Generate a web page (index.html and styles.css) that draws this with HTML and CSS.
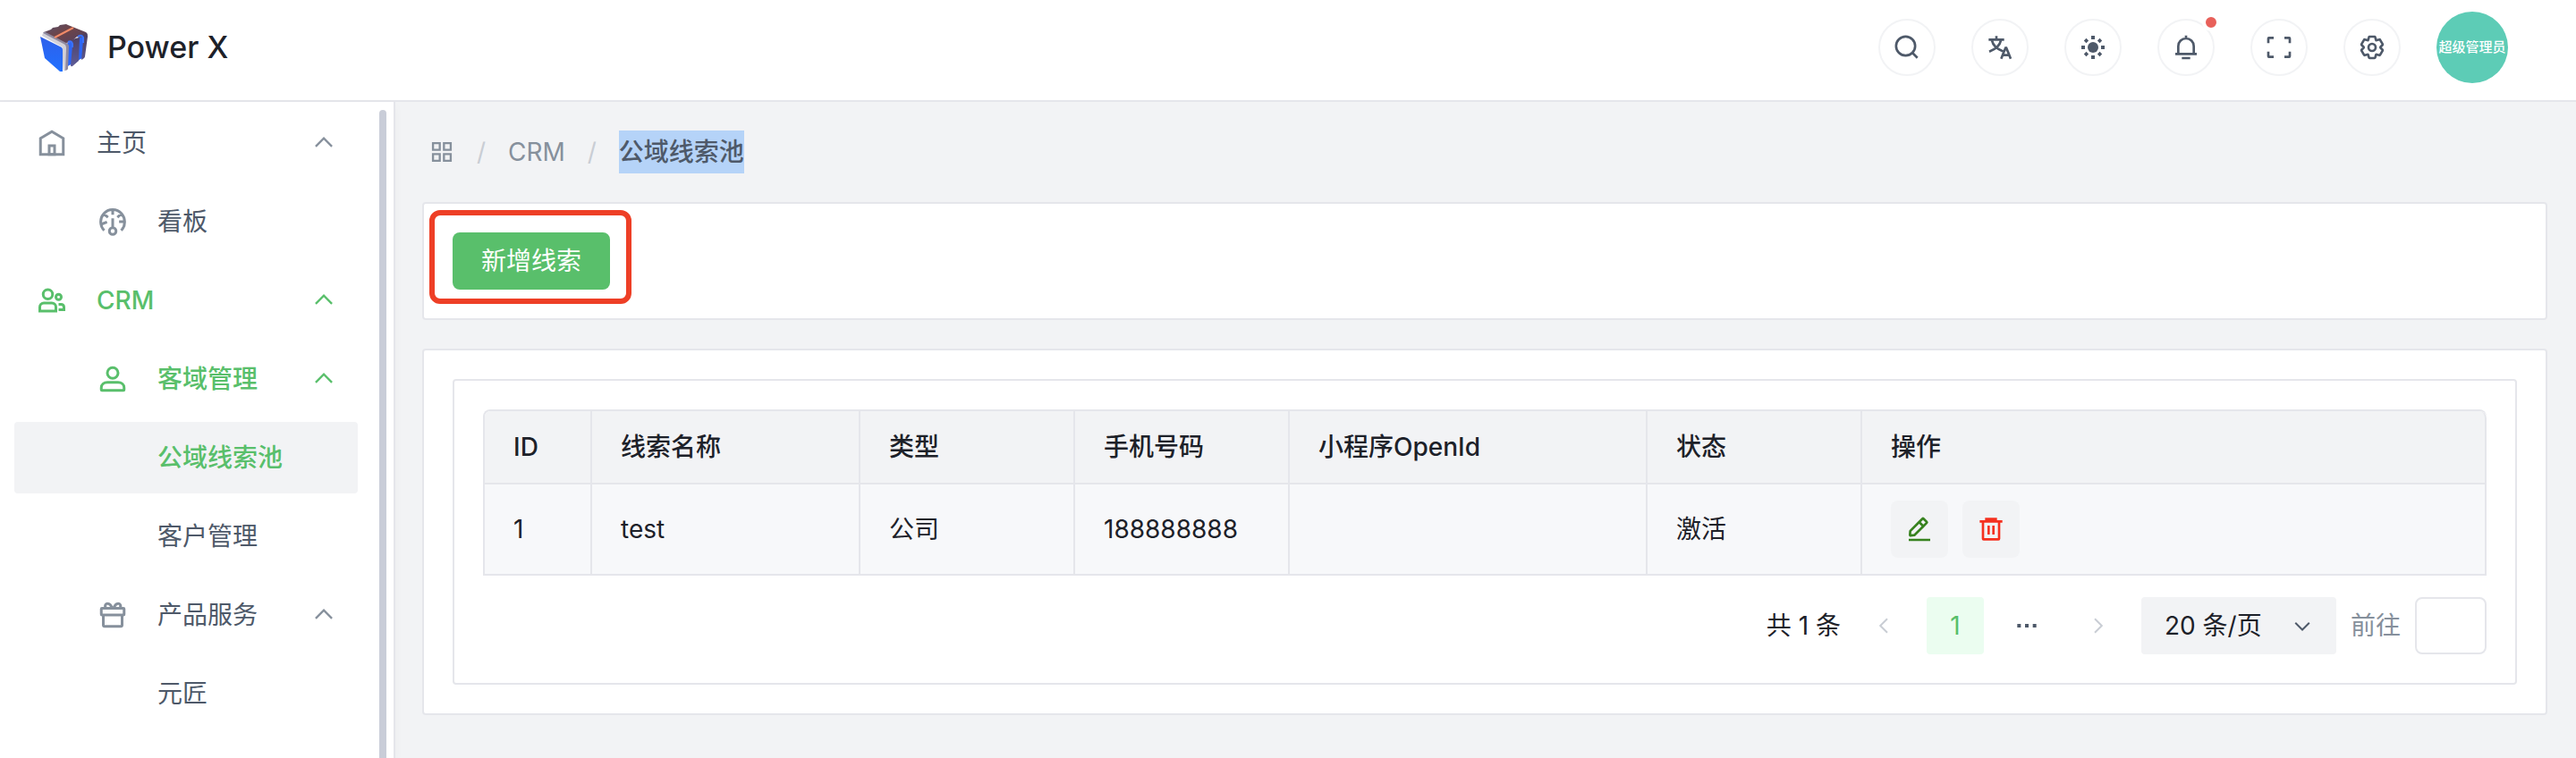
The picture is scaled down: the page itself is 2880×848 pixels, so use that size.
FILE: index.html
```html
<!DOCTYPE html>
<html lang="zh-CN">
<head>
<meta charset="utf-8">
<title>Power X</title>
<link rel="stylesheet" href="styles.css">
</head>
<body>
<svg class="sprite" aria-hidden="true">
  <symbol id="i-home" viewBox="0 0 48 48"><path d="M7 17 24 7l17 10v24H7V17Z"/><path d="M20 28h8v13h-8V28Z"/></symbol>
  <symbol id="i-dashboard" viewBox="0 0 48 48"><path d="M41.808 24c.118 4.63-1.486 9.333-5.21 13m5.21-13h-8.309m8.309 0c-.112-4.38-1.767-8.694-4.627-12M24 6c5.531 0 10.07 2.404 13.18 6M24 6c-5.724 0-10.384 2.574-13.5 6.38M24 6v7.5M37.18 12 31 17.5m-20.5-5.12L17 17.5m-6.5-5.12C6.99 16.662 5.44 22.508 6.53 28m4.872 9c-2.65-2.609-4.226-5.742-4.873-9m0 0 8.97-3.5M24 33a5 5 0 1 0 0 10 5 5 0 0 0 0-10Zm0 0V19"/></symbol>
  <symbol id="i-group" viewBox="0 0 48 48"><circle cx="18" cy="15" r="7"/><circle cx="34" cy="19" r="4"/><path d="M6 34a6 6 0 0 1 6-6h12a6 6 0 0 1 6 6v6H6v-6ZM34 30h4a4 4 0 0 1 4 4v4h-8"/></symbol>
  <symbol id="i-user" viewBox="0 0 48 48"><path d="M7 37c0-4.97 4.03-8 9-8h16c4.97 0 9 3.03 9 8v3a1 1 0 0 1-1 1H8a1 1 0 0 1-1-1v-3Z"/><circle cx="24" cy="15" r="8"/></symbol>
  <symbol id="i-gift" viewBox="0 0 48 48"><path d="M13.45 14.043H8a1 1 0 0 0-1 1v8a1 1 0 0 0 1 1h32a1 1 0 0 0 1-1v-8a1 1 0 0 0-1-1h-4.893m-21.657 0c-1.036-2.833-.615-5.6 1.182-6.637 2.152-1.243 5.464.464 7.397 3.812.539.933.914 1.896 1.127 2.825m-9.706 0h9.706m0 0H25.4m0 0a9.776 9.776 0 0 1 1.128-2.825c1.933-3.348 5.244-5.055 7.397-3.812 1.797 1.037 2.217 3.804 1.182 6.637m-9.707 0h9.707M10 26.043a2 2 0 0 1 2-2h24a2 2 0 0 1 2 2v13a2 2 0 0 1-2 2H12a2 2 0 0 1-2-2v-13Z"/></symbol>
  <symbol id="i-up" viewBox="0 0 48 48"><path d="M39.6 30.557 24.043 15 8.487 30.557"/></symbol>
  <symbol id="i-down" viewBox="0 0 48 48"><path d="M39.6 17.443 24.043 33 8.487 17.443"/></symbol>
  <symbol id="i-left" viewBox="0 0 48 48"><path d="M32 8.4 16.444 23.956 32 39.513"/></symbol>
  <symbol id="i-right" viewBox="0 0 48 48"><path d="m16 39.513 15.556-15.557L16 8.4"/></symbol>
  <symbol id="i-search" viewBox="0 0 48 48"><path d="M33.072 33.071c6.248-6.248 6.248-16.379 0-22.627-6.249-6.249-16.38-6.249-22.628 0-6.248 6.248-6.248 16.379 0 22.627 6.248 6.248 16.38 6.248 22.628 0Zm0 0 8.485 8.485"/></symbol>
  <symbol id="i-language" viewBox="0 0 48 48"><path d="m42 43-2.385-6M26 43l2.384-6m11.231 0-.795-2-4.18-10h-1.28l-4.181 10-.795 2m11.231 0h-11.23M18 5v6M5 11h26M10 11s1.889 7.826 6.611 12.174C21.333 27.522 30 31 30 31M26 11s-1.889 7.826-6.611 12.174C14.667 27.522 6 31 6 31"/></symbol>
  <symbol id="i-sun" viewBox="0 0 48 48"><g fill="currentColor" stroke="none"><circle cx="24" cy="24" r="9"/><path d="M21 4.5h6v6h-6zM21 37.5h6v6h-6zM4.500 21h6v6h-6zM37.500 21h6v6h-6zM12.700 8.700l4 4-4 4-4-4zM35.300 8.700l4 4-4 4-4-4zM12.700 31.300l4 4-4 4-4-4zM35.300 31.300l4 4-4 4-4-4z"/></g></symbol>
  <symbol id="i-bell" viewBox="0 0 48 48"><path d="M24 9c7.18 0 13 5.820 13 13v13H11V22c0-7.180 5.820-13 13-13Zm0 0V4M6 35h36m-25 7h14"/></symbol>
  <symbol id="i-full" viewBox="0 0 48 48"><path d="M42 17V9a1 1 0 0 0-1-1h-8M6 17V9a1 1 0 0 1 1-1h8m27 23v8a1 1 0 0 1-1 1h-8M6 31v8a1 1 0 0 0 1 1h8"/></symbol>
  <symbol id="i-settings" viewBox="0 0 48 48"><path d="M18.797 6.732A1 1 0 0 1 19.760 6h8.480a1 1 0 0 1 .964.732l1.285 4.628a1 1 0 0 0 1.213.7l4.651-1.200a1 1 0 0 1 1.116.468l4.240 7.344a1 1 0 0 1-.153 1.200L38.193 23.300a1 1 0 0 0 0 1.402l3.364 3.427a1 1 0 0 1 .153 1.200l-4.240 7.344a1 1 0 0 1-1.116.468l-4.650-1.200a1 1 0 0 0-1.214.7l-1.285 4.628a1 1 0 0 1-.964.732h-8.480a1 1 0 0 1-.963-.732L17.510 36.640a1 1 0 0 0-1.213-.7l-4.650 1.200a1 1 0 0 1-1.116-.468l-4.240-7.344a1 1 0 0 1 .153-1.200L9.809 24.700a1 1 0 0 0 0-1.402l-3.364-3.427a1 1 0 0 1-.153-1.200l4.240-7.344a1 1 0 0 1 1.116-.468l4.650 1.200a1 1 0 0 0 1.213-.7l1.286-4.628Z"/><circle cx="24" cy="24" r="6"/></symbol>
  <symbol id="i-apps" viewBox="0 0 48 48"><path d="M7 7h13v13H7V7Zm21 0h13v13H28V7ZM7 28h13v13H7V28Zm21 0h13v13H28V28Z"/></symbol>
  <symbol id="i-edit" viewBox="0 0 48 48"><path d="m30.480 19.038 5.733-5.734a1 1 0 0 0 0-1.414l-5.586-5.586a1 1 0 0 0-1.414 0l-5.734 5.734m7 7L15.763 33.754a1 1 0 0 1-.59.286l-6.048.708a1 1 0 0 1-1.113-1.069l.477-6.310a1 1 0 0 1 .29-.631l14.700-14.700m7 7-7-7M6 42h36"/></symbol>
  <symbol id="i-delete" viewBox="0 0 48 48"><path d="M5 11h5.500m0 0v29a1 1 0 0 0 1 1h25a1 1 0 0 0 1-1V11m-27 0H16m21.500 0H43m-5.500 0H32m-16 0V7h16v4m-16 0h16M20 18v15m8-15v15"/></symbol>
  <symbol id="i-more" viewBox="0 0 48 48"><path fill="currentColor" stroke="none" d="M8 21h6v6H8zM21 21h6v6h-6zM34 21h6v6h-6z"/></symbol>
</svg>

<header class="navbar">
  <div class="brand">
    <svg class="logo" viewBox="0 0 64 68" role="img" aria-label="Power X">
      <defs>
        <linearGradient id="face" x1="0" y1="0" x2="0" y2="1"><stop offset="0" stop-color="#2f60ea"/><stop offset="1" stop-color="#2070ff"/></linearGradient>
        <linearGradient id="top" x1="0" y1="0" x2="1" y2="1"><stop offset="0" stop-color="#55506e"/><stop offset=".4" stop-color="#6e4448"/><stop offset="1" stop-color="#4a4068"/></linearGradient>
        <linearGradient id="side" x1="0" y1="0" x2="0" y2="1"><stop offset="0" stop-color="#4c3d5e"/><stop offset="1" stop-color="#5d5c98"/></linearGradient>
      </defs>
      <path fill="#2d66f5" d="M34 30 55 20 52 46 34 56Z"/>
      <path fill="url(#top)" d="M9 17 17 14l2-2 6-1 2-2 7-1 2 1 20 8q2 1 1 4l-8 2-3-1-7 6-5 1-5 4-2-2Z"/>
      <path fill="url(#side)" d="M40 26q5-3 9-3l-1 26-7 6q-2 1-2-1l2-22q0-4-2-4ZM51 20l6-2q1 1 1 4l-3 22q0 2-4 4l2-22q0-4-3-4Z"/>
      <path fill="none" stroke="#3a72ff" stroke-width="2" d="M36 28q4-2 5 2v4M47 22q4-3 6 1v6"/>
      <path fill="#8f899f" d="M8 18q1-2 3-1l23 12q3 1 3 4l-1 25q-1 2-5 2l-1-27Z"/>
      <path fill="#d3d1d8" d="m8 18 23 12q3 1 3 5l-1 25h-2l-1-26L7 21Z"/>
      <path fill="url(#face)" d="m5 22 24 12q1 1 1 3v24h-3L10 46Z"/>
      <path fill="none" stroke="#f08a68" stroke-width="2" d="M21 23 42 12"/>
    </svg>
    <span class="brand-name">Power X</span>
  </div>
  <div class="tools">
    <button class="tool" aria-label="搜索"><svg class="icon"><use href="#i-search"/></svg></button>
    <button class="tool" aria-label="语言"><svg class="icon"><use href="#i-language"/></svg></button>
    <button class="tool" aria-label="主题"><svg class="icon"><use href="#i-sun"/></svg></button>
    <button class="tool" aria-label="消息通知"><svg class="icon"><use href="#i-bell"/></svg><span class="dot"></span></button>
    <button class="tool" aria-label="全屏"><svg class="icon"><use href="#i-full"/></svg></button>
    <button class="tool" aria-label="设置"><svg class="icon"><use href="#i-settings"/></svg></button>
    <button class="avatar">超级管理员</button>
  </div>
</header>

<div class="layout">
  <aside class="sidebar">
    <nav class="menu">
      <button class="item"><svg class="icon"><use href="#i-home"/></svg><span class="label">主页</span><svg class="icon chevron"><use href="#i-up"/></svg></button>
      <a class="item sub" href="#board"><svg class="icon"><use href="#i-dashboard"/></svg><span class="label">看板</span></a>
      <button class="item active"><svg class="icon"><use href="#i-group"/></svg><span class="label">CRM</span><svg class="icon chevron"><use href="#i-up"/></svg></button>
      <button class="item sub active"><svg class="icon"><use href="#i-user"/></svg><span class="label">客域管理</span><svg class="icon chevron"><use href="#i-up"/></svg></button>
      <a class="item leaf active current" href="#leads" aria-current="page"><span class="label">公域线索池</span></a>
      <a class="item leaf" href="#customers"><span class="label">客户管理</span></a>
      <button class="item sub"><svg class="icon"><use href="#i-gift"/></svg><span class="label">产品服务</span><svg class="icon chevron"><use href="#i-up"/></svg></button>
      <a class="item leaf" href="#yuanjiang"><span class="label">元匠</span></a>
    </nav>
    <div class="thumb"></div>
  </aside>

  <main class="content">
    <nav class="breadcrumb" aria-label="面包屑">
      <svg class="icon"><use href="#i-apps"/></svg>
      <span class="slash">/</span>
      <span>CRM</span>
      <span class="slash">/</span>
      <span class="here">公域线索池</span>
    </nav>

    <section class="card">
      <div class="callout"><button class="primary">新增线索</button></div>
    </section>

    <section class="card">
      <div class="card">
        <table class="table">
          <colgroup><col class="c-id"><col class="c-name"><col class="c-mid"><col class="c-mid"><col class="c-open"><col class="c-mid"><col></colgroup>
          <thead>
            <tr><th>ID</th><th>线索名称</th><th>类型</th><th>手机号码</th><th>小程序OpenId</th><th>状态</th><th>操作</th></tr>
          </thead>
          <tbody>
            <tr><td>1</td><td>test</td><td>公司</td><td>188888888</td><td></td><td>激活</td>
              <td><div class="actions">
                <button class="square edit" aria-label="编辑"><svg class="icon"><use href="#i-edit"/></svg></button>
                <button class="square delete" aria-label="删除"><svg class="icon"><use href="#i-delete"/></svg></button>
              </div></td></tr>
          </tbody>
        </table>
        <div class="pagination">
          <span>共 1 条</span>
          <button class="page step" aria-label="上一页" disabled><svg class="icon"><use href="#i-left"/></svg></button>
          <button class="page on">1</button>
          <button class="page more" aria-label="更多"><svg class="icon"><use href="#i-more"/></svg></button>
          <button class="page step" aria-label="下一页" disabled><svg class="icon"><use href="#i-right"/></svg></button>
          <div class="size">
            <select aria-label="每页条数"><option>20 条/页</option></select>
            <svg class="icon"><use href="#i-down"/></svg>
          </div>
          <label class="jump" for="jump">前往</label>
          <input class="jump-input" id="jump" type="text">
        </div>
      </div>
    </section>
  </main>
</div>
</body>
</html>
```
FILE: styles.css
```css
:root {
  --green: #59bf6b;
  --ink: #1d2129;
  --text: #4e5969;
  --muted: #86909c;
  --faint: #c9cdd4;
  --line: #e5e6eb;
  --fill: #f2f3f5;
}

* { box-sizing: border-box; }

body {
  margin: 0;
  height: 100vh;
  display: flex;
  flex-direction: column;
  overflow: hidden;
  background: var(--fill);
  color: var(--ink);
  font: 400 28px/44px Inter, "Noto Sans CJK SC", sans-serif;
}

button, input, select {
  margin: 0;
  padding: 0;
  border: 0;
  background: none;
  color: inherit;
  font: inherit;
}

.sprite { display: none; }

.icon {
  flex: none;
  width: 32px;
  height: 32px;
  fill: none;
  stroke: currentColor;
  stroke-width: 4;
}

/* Top bar */
.navbar {
  flex: none;
  display: flex;
  align-items: center;
  justify-content: space-between;
  height: 114px;
  padding: 0 76px 6px 40px;
  background: #fff;
  border-bottom: 2px solid var(--line);
}

.brand { display: flex; align-items: center; gap: 16px; }
.logo { width: 64px; height: 68px; }
.brand-name { font-size: 34px; font-weight: 500; }

.tools { display: flex; align-items: center; gap: 40px; }

.tool {
  position: relative;
  display: grid;
  place-items: center;
  width: 64px;
  height: 64px;
  border: 2px solid var(--fill);
  border-radius: 50%;
  color: var(--text);
}

.dot {
  position: absolute;
  top: -8px;
  right: -8px;
  width: 20px;
  height: 20px;
  border: 4px solid #fff;
  border-radius: 50%;
  background: #e8605a;
}

.avatar {
  width: 80px;
  height: 80px;
  border-radius: 50%;
  background: #5dccb6;
  color: #fff;
  font-size: 15px;
  font-weight: 500;
  white-space: nowrap;
}

/* Side menu */
.layout { flex: 1; display: flex; min-height: 0; }

.sidebar {
  position: relative;
  flex: none;
  width: 442px;
  background: #fff;
  border-right: 2px solid var(--line);
  box-shadow: 0 4px 10px rgba(0, 0, 0, .03);
}

.menu {
  display: flex;
  flex-direction: column;
  gap: 8px;
  padding: 6px 40px 6px 16px;
}

.item {
  display: flex;
  align-items: center;
  gap: 32px;
  height: 80px;
  padding: 0 24px;
  border-radius: 4px;
  color: var(--text);
  text-align: left;
  text-decoration: none;
}

.item.sub { padding-left: 92px; }
.item.leaf { padding-left: 160px; }
.item .icon { width: 36px; height: 36px; color: var(--muted); }
.item .label { flex: 1; }
.item .chevron { width: 28px; height: 28px; }
.item.active { color: var(--green); font-weight: 500; }
.item.active .icon { color: var(--green); }
.item.current { background: var(--fill); }

.thumb {
  position: absolute;
  top: 9px;
  right: 8px;
  bottom: 0;
  width: 8px;
  border-radius: 4px 4px 0 0;
  background: #c9cdd8;
}

/* Page */
.content { flex: 1; min-width: 0; padding: 32px 32px 0 30px; }

.breadcrumb {
  display: flex;
  align-items: center;
  gap: 24px;
  margin-bottom: 32px;
  padding-left: 8px;
  line-height: 48px;
  color: var(--muted);
}

.breadcrumb .icon { width: 28px; height: 28px; }
.slash { width: 12px; text-align: center; color: var(--faint); }
.here { background: #b5d3f8; color: var(--text); font-weight: 500; }

.card {
  padding: 32px;
  border: 2px solid var(--line);
  border-radius: 4px;
  background: #fff;
}

.card + .card { margin-top: 32px; }

.callout { position: relative; width: max-content; }

.callout::after {
  content: "";
  position: absolute;
  inset: -25px -24px -16px -26px;
  border: 6px solid #ee3f26;
  border-radius: 12px;
  pointer-events: none;
}

.primary {
  display: block;
  height: 64px;
  padding: 0 32px;
  border-radius: 8px;
  background: var(--green);
  color: #fff;
}

/* Table */
.table {
  width: 100%;
  table-layout: fixed;
  border: solid var(--line);
  border-width: 2px 0 0 2px;
  border-spacing: 0;
  border-radius: 8px 8px 0 0;
  overflow: hidden;
}

.c-id { width: 120px; }
.c-name { width: 300px; }
.c-mid { width: 240px; }
.c-open { width: 400px; }

th, td {
  padding: 18px 32px;
  border: solid var(--line);
  border-width: 0 2px 2px 0;
  text-align: left;
}

th { background: var(--fill); font-weight: 500; }
td { background: #f7f8fa; }
th:last-child { border-top-right-radius: 8px; }

.actions { display: flex; gap: 16px; }

.square {
  display: grid;
  place-items: center;
  width: 64px;
  height: 64px;
  border-radius: 8px;
  background: var(--fill);
}

.edit { color: #37821f; }
.delete { color: #f5301f; }

/* Pagination */
.pagination {
  display: flex;
  align-items: center;
  justify-content: flex-end;
  gap: 16px;
  margin-top: 24px;
}

.page {
  display: grid;
  place-items: center;
  width: 64px;
  height: 64px;
  border-radius: 4px;
  color: var(--text);
}

.page .icon { width: 24px; height: 24px; }
.page.more .icon { width: 32px; height: 32px; }
.page.on { background: #ebfdf0; color: var(--green); }
.page.step { color: var(--faint); }

.size {
  display: grid;
  align-items: center;
  color: var(--text);
}

.size > * { grid-area: 1 / 1; }

.size select {
  appearance: none;
  width: 218px;
  height: 64px;
  padding: 0 26px;
  border-radius: 4px;
  background: var(--fill);
  color: var(--ink);
}

.size .icon {
  justify-self: end;
  width: 24px;
  height: 24px;
  margin-right: 26px;
  pointer-events: none;
}

.jump { color: var(--muted); }

.jump-input {
  width: 80px;
  height: 64px;
  padding: 0 12px;
  border: 2px solid var(--line);
  border-radius: 8px;
  background: #fff;
}
```
